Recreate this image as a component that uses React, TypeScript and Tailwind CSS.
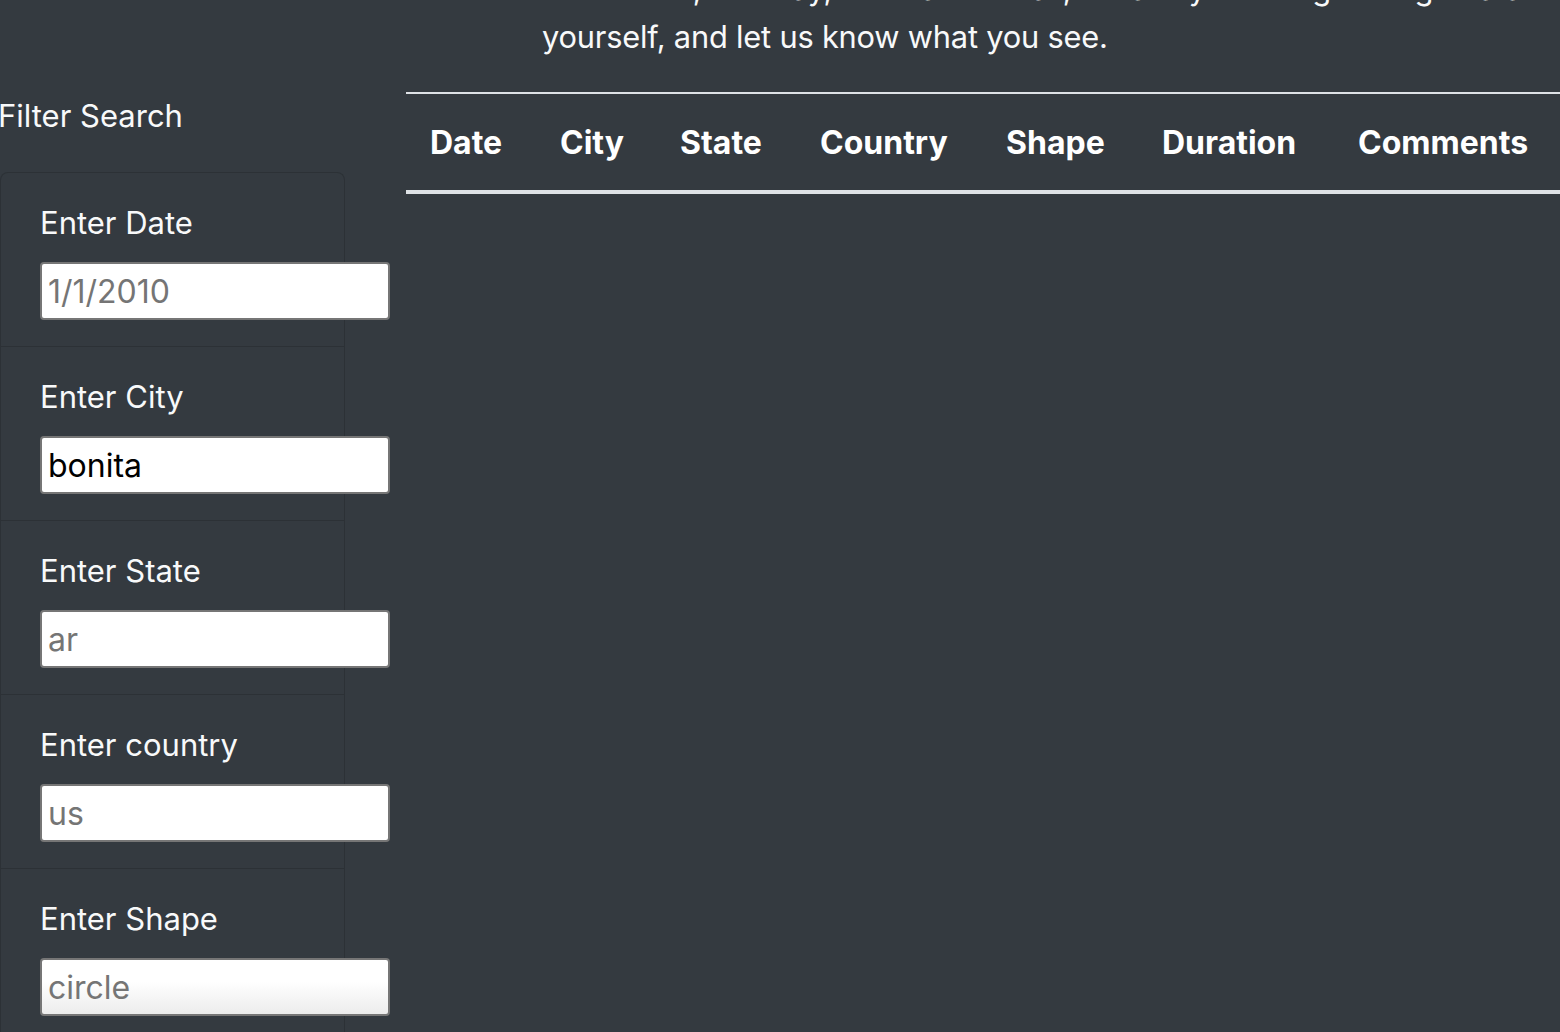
import React from "react";

const fields = [
  { label: "Enter Date", value: "", placeholder: "1/1/2010" },
  { label: "Enter City", value: "bonita", placeholder: "" },
  { label: "Enter State", value: "", placeholder: "ar" },
  { label: "Enter country", value: "", placeholder: "us" },
  { label: "Enter Shape", value: "", placeholder: "circle" },
];

const cols = [
  { name: "Date", w: "w-[130px]" },
  { name: "City", w: "w-[120px]" },
  { name: "State", w: "w-[140px]" },
  { name: "Country", w: "w-[186px]" },
  { name: "Shape", w: "w-[156px]" },
  { name: "Duration", w: "w-[196px]" },
  { name: "Comments", w: "w-[226px]" },
];

export default function App() {
  return (
    <div
      className="w-[1560px] h-[1032px] overflow-hidden bg-[#343a40] text-white"
      style={{ fontFamily: "Inter, 'Noto Sans', sans-serif" }}
    >
      <div className="flex flex-col">
        <div className="flex">
          <div className="w-[406px] shrink-0" />
          <p className="-mt-[35px] ml-[136px] whitespace-nowrap text-[30.8px] leading-[48px] text-[#f8f9fa] tracking-[-0.2px]">
            to be seen, one day, once and for all, we ask you to dig through data
            <br />
            yourself, and let us know what you see.
          </p>
        </div>
        <div className="flex mt-[31px]">
          <aside className="w-[345px] shrink-0">
            <h5 className="-ml-[2px] h-[47px] text-[31px] leading-[48px] text-[#f8f9fa]">Filter Search</h5>
            <ul className="mt-[33px] rounded-t-[8px] border border-[#2c3136] border-b-0">
              {fields.map((f, i) => (
                <li
                  key={f.label}
                  className="border-b border-[#2c3136] pl-[39px] pt-[26px] pb-[26px]"
                >
                  <label className="block h-[45px] pt-[1px] text-[31px] leading-[45px] text-[#f8f9fa]">
                    {f.label}
                  </label>
                  <input
                    readOnly
                    defaultValue={f.value}
                    placeholder={f.placeholder}
                    className={
                      i === 4
                        ? "mt-[18px] block w-[350px] h-[58px] rounded-[4px] border-2 border-[#767676] bg-gradient-to-b from-white from-40% to-[#ececec] pl-[6px] text-[32px] text-black placeholder:text-[#757575] outline-none"
                        : "mt-[18px] block w-[350px] h-[58px] rounded-[4px] border-2 border-[#767676] bg-white pl-[6px] text-[32px] text-black placeholder:text-[#757575] outline-none"
                    }
                    style={{ fontFamily: "Inter, 'Noto Sans', sans-serif" }}
                  />
                </li>
              ))}
            </ul>
          </aside>
          <div className="ml-[61px] flex-1">
            <table className="border-collapse">
              <thead>
                <tr className="border-t-2 border-b-4 border-[#dee2e6]">
                  {cols.map((c) => (
                    <th
                      key={c.name}
                      className={`${c.w} px-[24px] pt-[25px] pb-[23px] text-left text-[32px] leading-[48px] font-bold text-white`}
                    >
                      {c.name}
                    </th>
                  ))}
                </tr>
              </thead>
              <tbody />
            </table>
          </div>
        </div>
      </div>
    </div>
  );
}
